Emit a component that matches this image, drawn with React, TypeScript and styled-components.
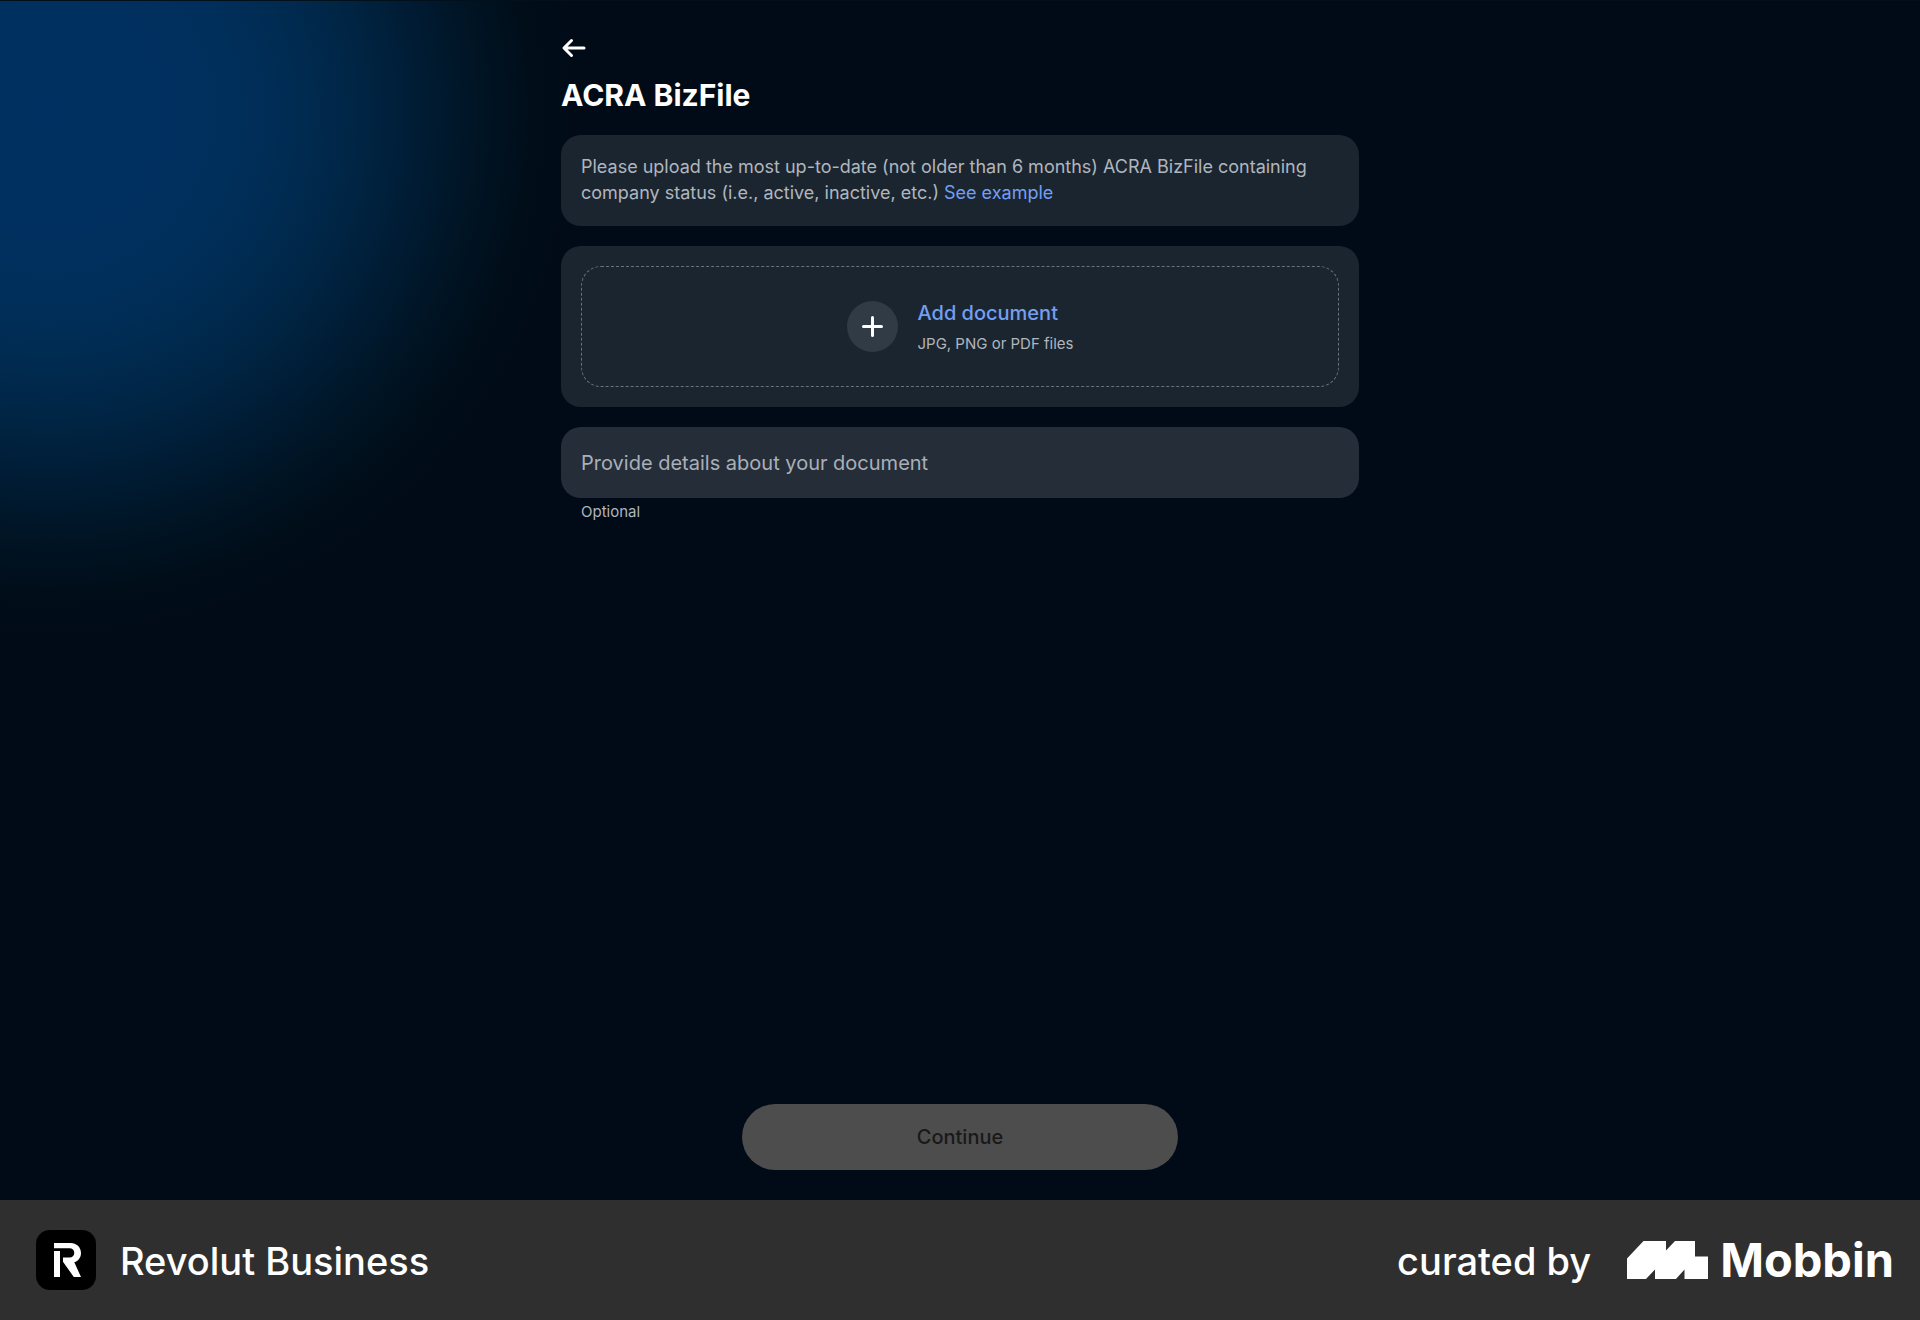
import React from "react";
import styled, { createGlobalStyle } from "styled-components";

const GlobalStyle = createGlobalStyle`
  *, *::before, *::after { box-sizing: border-box; }
  body {
    margin: 0;
    background: #000b17;
    font-family: Inter, "Liberation Sans", sans-serif;
    color: #ffffff;
  }
  button, input { font-family: inherit; }
`;

const Page = styled.div`
  min-height: 100vh;
  display: flex;
  flex-direction: column;
`;

const Screen = styled.main`
  flex: 1;
  display: flex;
  flex-direction: column;
  align-items: center;
  padding: 33px 24px 30px;
  border-top: 1px solid #02101c;
  background:
    radial-gradient(
      circle at 50px 110px,
      #003061 0,
      #003060 110px,
      #002f5b 190px,
      #002b51 250px,
      #002544 310px,
      #001c34 370px,
      #001424 430px,
      #000e1a 480px,
      #000b17 530px
    ),
    #000b17;
`;

const Column = styled.div`
  width: 100%;
  max-width: 798px;
  flex: 1;
  display: flex;
  flex-direction: column;
  gap: 20px;
`;

const Header = styled.header`
  display: flex;
  flex-direction: column;
  align-items: flex-start;
  gap: 14px;
  padding-bottom: 1px;
`;

const BackButton = styled.button`
  display: flex;
  padding: 0;
  border: 0;
  background: none;
  color: #ffffff;
  cursor: pointer;
`;

const Title = styled.h1`
  margin: 0;
  font-size: 30px;
  line-height: 38px;
  font-weight: 700;
`;

const Card = styled.section`
  padding: 20px;
  border-radius: 20px;
  background: #1b2530;
`;

const Note = styled(Card)`
  padding-top: 19px;
`;

const NoteText = styled.p`
  margin: 0;
  font-size: 18px;
  line-height: 26px;
  color: #b0b6bd;
`;

const Link = styled.a`
  color: #739ff2;
  text-decoration: none;
`;

const DropZone = styled.button`
  width: 100%;
  height: 121px;
  display: flex;
  align-items: center;
  justify-content: center;
  gap: 20px;
  border: 1px dashed #69727c;
  border-radius: 20px;
  background: none;
  text-align: left;
  cursor: pointer;
`;

const PlusBadge = styled.span`
  width: 51px;
  height: 51px;
  display: grid;
  place-items: center;
  border-radius: 50%;
  background: #313b45;
`;

const DropText = styled.span`
  display: flex;
  flex-direction: column;
  gap: 4px;
`;

const DropTitle = styled.span`
  font-size: 20px;
  line-height: 30px;
  font-weight: 500;
  color: #739ff2;
`;

const Caption = styled.span`
  font-size: 15px;
  line-height: 24px;
  color: #b0b6bd;
`;

const Field = styled.div`
  display: flex;
  flex-direction: column;
`;

const TextInput = styled.input`
  width: 100%;
  height: 71px;
  padding: 0 20px;
  border: 0;
  border-radius: 20px;
  background: #252d39;
  font-size: 20px;
  color: #ffffff;
  &::placeholder { color: #a9b0b8; opacity: 1; }
`;

const Hint = styled(Caption)`
  padding: 2px 20px 0;
`;

const ContinueButton = styled.button`
  width: 100%;
  max-width: 436px;
  height: 66px;
  border: 0;
  border-radius: 33px;
  background: #4d4d4d;
  font-size: 20px;
  font-weight: 500;
  color: #191919;
`;

const Footer = styled.footer`
  height: 120px;
  display: flex;
  align-items: center;
  justify-content: space-between;
  padding: 0 26px 0 36px;
  background: #2f2f2f;
`;

const Brand = styled.div<{ $gap: number }>`
  display: flex;
  align-items: center;
  gap: ${(p) => p.$gap}px;
`;

const FooterText = styled.span`
  padding-top: 2px;
  font-size: 38px;
  line-height: 48px;
  font-weight: 500;
`;

const Wordmark = styled.span`
  font-size: 47px;
  line-height: 60px;
  font-weight: 700;
`;

export default function App() {
  return (
    <Page>
      <GlobalStyle />
      <Screen>
        <Column>
          <Header>
            <BackButton type="button" aria-label="Back">
              <svg width="26" height="28" viewBox="0 0 26 28" fill="none" stroke="currentColor" strokeWidth="3" strokeLinecap="round" strokeLinejoin="round">
                <path d="M23 14H3.5M10.500 6.500 3 14l7.500 7.500" />
              </svg>
            </BackButton>
            <Title>ACRA BizFile</Title>
          </Header>
          <Note>
            <NoteText>
              Please upload the most up-to-date (not older than 6 months) ACRA BizFile containing
              company status (i.e., active, inactive, etc.) <Link href="#example">See example</Link>
            </NoteText>
          </Note>
          <Card>
            <DropZone type="button">
              <PlusBadge>
                <svg width="23" height="23" viewBox="0 0 23 23" stroke="#ffffff" strokeWidth="3" strokeLinecap="round" aria-hidden="true">
                  <path d="M11.500 2.500v18M2.500 11.500h18" />
                </svg>
              </PlusBadge>
              <DropText>
                <DropTitle>Add document</DropTitle>
                <Caption>JPG, PNG or PDF files</Caption>
              </DropText>
            </DropZone>
          </Card>
          <Field>
            <TextInput
              type="text"
              aria-label="Provide details about your document"
              aria-describedby="details-hint"
              placeholder="Provide details about your document"
            />
            <Hint id="details-hint">Optional</Hint>
          </Field>
        </Column>
        <ContinueButton type="button" disabled>
          Continue
        </ContinueButton>
      </Screen>
      <Footer>
        <Brand $gap={24}>
          <svg width="60" height="60" viewBox="0 0 60 60" aria-hidden="true">
            <rect width="60" height="60" rx="14" fill="#000000" />
            <path d="M18 21h6v26h-6z" fill="#ffffff" />
            <path d="M18 13h16.500C40.500 13 45 17.200 45 23c0 4.400-2.600 8-6.700 9.300L45 47h-7.200L27 31.800V27.500h6.500c2.800 0 4.800-1.800 4.800-4.500s-2-4.700-4.800-4.700H18z" fill="#ffffff" />
          </svg>
          <FooterText>Revolut Business</FooterText>
        </Brand>
        <Brand $gap={36}>
          <FooterText>curated by</FooterText>
          <Brand $gap={12}>
            <svg width="81" height="38" viewBox="0 0 81 38" fill="#ffffff" aria-hidden="true">
              <path d="M16.500 0H39v9.500L48 0H68v15.500h13V38H57.500v-9.500L49 38H28v-9.500L19 38H0V17.500z" />
            </svg>
            <Wordmark>Mobbin</Wordmark>
          </Brand>
        </Brand>
      </Footer>
    </Page>
  );
}
